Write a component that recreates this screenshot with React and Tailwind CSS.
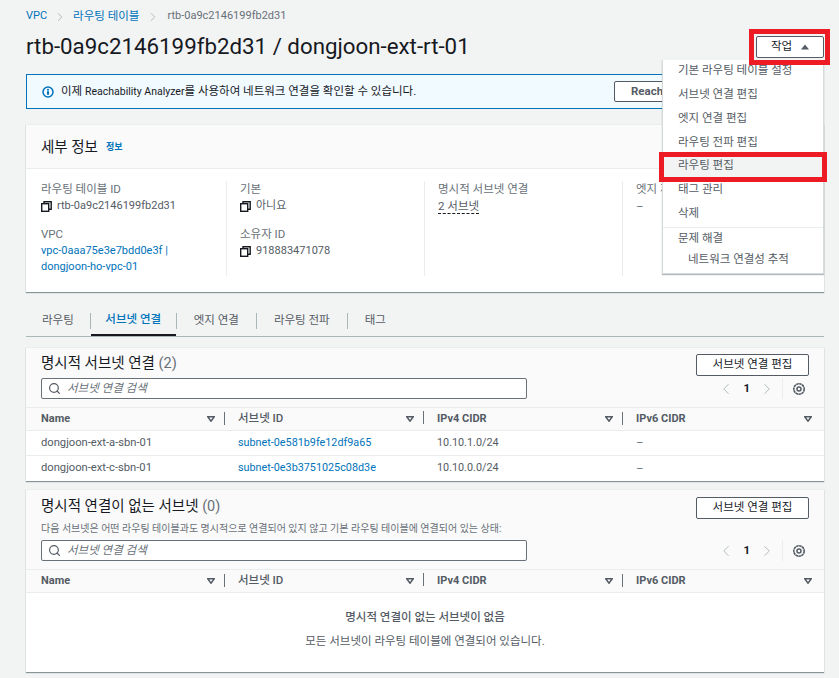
import React from 'react';
import { ChevronLeft, ChevronRight, Search } from 'lucide-react';

const FONT = "font-['Roboto','Noto_Sans_CJK_KR',sans-serif]";

function CopyIcon() {
  return (
    <svg width="11" height="11" viewBox="0 0 11 11" fill="none" stroke="#16191f" strokeWidth="1.4" className="shrink-0">
      <rect x="0.7" y="2.7" width="7" height="7.6" fill="#fff" />
      <path d="M3 2.5V0.8h7.2v7.4H8" />
    </svg>
  );
}

function InfoIcon() {
  return (
    <svg width="12" height="12" viewBox="0 0 12 12" className="shrink-0">
      <circle cx="6" cy="6" r="5" fill="none" stroke="#0073bb" strokeWidth="1.5" />
      <rect x="5" y="5.2" width="2" height="3.6" fill="#0073bb" />
      <rect x="5" y="2.9" width="2" height="1.6" fill="#0073bb" />
    </svg>
  );
}

function GearIcon() {
  return (
    <svg width="14" height="14" viewBox="0 0 14 14" fill="none" stroke="#545b64" className="shrink-0">
      <circle cx="7" cy="7" r="5.2" strokeWidth="1.6" strokeDasharray="2.6 0.4" />
      <circle cx="7" cy="7" r="2" strokeWidth="1.5" />
    </svg>
  );
}

function Caret({ up, className = '' }) {
  return (
    <svg width="8" height="6" viewBox="0 0 8 6" className={className}>
      {up ? (
        <path d="M4 0.5L8 5.5H0Z" fill="#545b64" />
      ) : (
        <path d="M0.8 0.8H7.2L4 5.2Z" fill="#fff" stroke="#545b64" strokeWidth="1.5" />
      )}
    </svg>
  );
}

function Field({ label, children, className = '' }) {
  return (
    <div className={className}>
      <div className="text-[#687078] leading-[15px] pt-[1px]">{label}</div>
      <div className="leading-[16px] pt-[1px]">{children}</div>
    </div>
  );
}

function Copyable({ children }) {
  return (
    <div className="flex items-center gap-[5px] text-[#545b64] text-[11px]">
      <CopyIcon />
      <span>{children}</span>
    </div>
  );
}

function HeaderCell({ children, first, last, korean }) {
  return (
    <div className={`flex items-center w-[199px] pr-[10px] relative shrink-0 ${first ? 'pl-[15px]' : 'pl-[13px]'}`}>
      <span className={`grow text-[#545b64] ${korean ? 'font-medium' : 'font-bold text-[11px]'}`}>{children}</span>
      <Caret />
      {!last && <span className="absolute right-[0px] top-[1px] h-[13px] w-px bg-[#687078]" />}
    </div>
  );
}

function TableHeader() {
  return (
    <div className="flex items-center h-[24px] bg-[#fafafa] border-y border-[#eaeded]">
      <HeaderCell first>Name</HeaderCell>
      <HeaderCell korean>서브넷 ID</HeaderCell>
      <HeaderCell>IPv4 CIDR</HeaderCell>
      <HeaderCell last>IPv6 CIDR</HeaderCell>
    </div>
  );
}

function Row({ name, id, cidr, last }) {
  return (
    <div className={`flex items-center h-[25px] ${last ? '' : 'border-b border-[#eaeded]'}`}>
      <div className="w-[199px] pl-[15px] shrink-0 text-[#545b64] text-[11.2px]">{name}</div>
      <div className="w-[199px] pl-[13px] shrink-0 text-[#0073bb] text-[10.8px]">{id}</div>
      <div className="w-[199px] pl-[13px] shrink-0 text-[#545b64] text-[10.8px]">{cidr}</div>
      <div className="pl-[13px] text-[#687078]">–</div>
    </div>
  );
}

function SearchBox() {
  return (
    <div className="w-[486px] h-[21px] flex items-center gap-[6px] pl-[6px] bg-white border border-[#687078] rounded-[2px]">
      <Search size={13} strokeWidth={2.2} color="#545b64" />
      <span className="italic text-[#687078]">서브넷 연결 검색</span>
    </div>
  );
}

function Pager() {
  return (
    <div className="flex items-center h-[21px] mr-[3px]">
      <ChevronLeft size={18} strokeWidth={1.2} color="#aab7b8" />
      <span className="mx-[8px] font-bold text-[#16191f]">1</span>
      <ChevronRight size={18} strokeWidth={1.2} color="#aab7b8" />
      <span className="ml-[6px] h-[21px] w-px bg-[#eaeded]" />
      <span className="ml-[9px]"><GearIcon /></span>
    </div>
  );
}

function EditButton() {
  return (
    <div className="w-[113px] h-[22px] flex items-center justify-center bg-white border border-[#545b64] rounded-[2px] text-[#16191f]">
      서브넷 연결 편집
    </div>
  );
}

const menuItems = ['기본 라우팅 테이블 설정', '서브넷 연결 편집', '엣지 연결 편집', '라우팅 전파 편집', '라우팅 편집', '태그 관리', '삭제'];

function ActionMenu() {
  return (
    <div className="absolute left-[662px] top-[60px] w-[162px] h-[214px] bg-white border-r border-b border-l border-[#d5dbdb] shadow-[0_1px_1px_rgba(0,28,36,0.3)] text-[#545b64]">
      <div className="-mt-[1px]">
        {menuItems.map((item, i) => (
          <div key={item} className={`h-[23.8px] pl-[15px] flex items-center ${i === 4 ? 'bg-[#f2f3f3]' : ''}`}>
            {item}
          </div>
        ))}
      </div>
      <div className="border-t border-[#eaeded] mt-[1px] h-[23px] pl-[15px] pt-[1px] flex items-center">문제 해결</div>
      <div className="h-[20px] pl-[25px] flex items-center">네트워크 연결성 추적</div>
    </div>
  );
}

export default function App() {
  return (
    <div className={`${FONT} relative w-[839px] h-[678px] overflow-hidden bg-[#f2f3f3] text-[11.5px] text-[#16191f]`}>
      <div className="w-[798px] ml-[26px] flex flex-col">
        <nav className="flex items-center h-[13px] mt-[10px]">
          <span className="text-[#0073bb] text-[11px]">VPC</span>
          <ChevronRight size={14} strokeWidth={1} color="#879596" className="mx-[6px]" />
          <span className="text-[#0073bb]">라우팅 테이블</span>
          <ChevronRight size={14} strokeWidth={1} color="#879596" className="mx-[7px]" />
          <span className="text-[#687078] text-[11px]">rtb-0a9c2146199fb2d31</span>
        </nav>

        <div className="flex items-center justify-between h-[28px] mt-[10px]">
          <h1 className="text-[22.3px] font-normal text-[#16191f]">rtb-0a9c2146199fb2d31 / dongjoon-ext-rt-01</h1>
          <div className="w-[68px] h-[22px] flex items-center justify-center gap-[9px] bg-white border border-[#545b64] rounded-[2px]">
            작업 <Caret up />
          </div>
        </div>

        <div className="flex items-center justify-between h-[35px] mt-[13px] bg-[#f1faff] border border-[#0073bb] pl-[15px] pr-[10px]">
          <div className="flex items-center gap-[7px]">
            <InfoIcon />
            <span>이제 <span className="text-[10.5px]">Reachability Analyzer</span>를 사용하여 네트워크 연결을 확인할 수 있습니다.</span>
          </div>
          <div className="w-[199px] h-[21px] flex items-center pl-[16px] bg-white border border-[#545b64] rounded-[2px] font-bold text-[#545b64]">
            Reachability Analyzer
          </div>
        </div>

        <section className="mt-[15px] h-[168px] bg-white border-t border-[#eaeded] shadow-[0_1px_1px_#879596]">
          <div className="h-[44px] flex items-center pl-[15px] pt-[3px] gap-[8px] bg-[#fafafa] border-b border-[#eaeded]">
            <h2 className="text-[14.5px] font-normal leading-[16px]">세부 정보</h2>
            <span className="text-[9px] text-[#0073bb] font-bold">정보</span>
          </div>
          <div className="flex mt-[12px] h-[95px]">
            <div className="w-[201px] pl-[15px] border-r border-[#eaeded]">
              <Field label="라우팅 테이블 ID"><Copyable>rtb-0a9c2146199fb2d31</Copyable></Field>
              <Field label="VPC" className="mt-[12px]">
                <div className="text-[#0073bb] text-[11px]">vpc-0aaa75e3e7bdd0e3f |<br />dongjoon-ho-vpc-01</div>
              </Field>
            </div>
            <div className="w-[198px] pl-[13px] border-r border-[#eaeded]">
              <Field label="기본"><Copyable>아니요</Copyable></Field>
              <Field label="소유자 ID" className="mt-[12px]"><Copyable>918883471078</Copyable></Field>
            </div>
            <div className="w-[198px] pl-[13px] border-r border-[#eaeded]">
              <Field label="명시적 서브넷 연결">
                <span className="border-b border-dashed border-[#16191f] text-[#545b64]">2 서브넷</span>
              </Field>
            </div>
            <div className="pl-[13px]">
              <Field label="엣지 게이트웨이 연결"><span className="text-[#687078]">–</span></Field>
            </div>
          </div>
        </section>

        <div className="mt-[13px] h-[32px] flex items-start border-b border-[#aab7b8] text-[#545b64]">
          <div className="flex items-center h-[31px]">
            <span className="px-[16px]">라우팅</span>
            <span className="h-[16px] w-px bg-[#aab7b8]" />
          </div>
          <div className="flex items-center justify-center h-[31px] w-[85px] font-medium text-[#0073bb] border-b-2 border-[#16191f]">서브넷 연결</div>
          <div className="flex items-center h-[31px]">
            <span className="h-[16px] w-px bg-[#aab7b8]" />
            <span className="px-[17px]">엣지 연결</span>
            <span className="h-[16px] w-px bg-[#aab7b8]" />
            <span className="px-[17px]">라우팅 전파</span>
            <span className="h-[16px] w-px bg-[#aab7b8]" />
            <span className="px-[17px]">태그</span>
          </div>
        </div>

        <section className="mt-[10px] bg-white shadow-[0_1px_1px_#879596] border-t border-[#eaeded]">
          <div className="bg-[#fafafa] h-[59px] flex justify-between pl-[15px] pr-[15px]">
            <div className="pt-[6px]">
              <div className="text-[14.5px] leading-[20px]">명시적 서브넷 연결 <span className="text-[#687078]">(2)</span></div>
              <div className="mt-[4px]"><SearchBox /></div>
            </div>
            <div className="flex flex-col items-end gap-[2px] pt-[6px]">
              <EditButton />
              <Pager />
            </div>
          </div>
          <TableHeader />
          <Row name="dongjoon-ext-a-sbn-01" id="subnet-0e581b9fe12df9a65" cidr="10.10.1.0/24" />
          <Row name="dongjoon-ext-c-sbn-01" id="subnet-0e3b3751025c08d3e" cidr="10.10.0.0/24" last />
        </section>

        <section className="mt-[8px] h-[183px] bg-white shadow-[0_1px_1px_#879596] border-t border-[#eaeded]">
          <div className="bg-[#fafafa] h-[79px] flex justify-between pl-[15px] pr-[15px]">
            <div className="pt-[7px]">
              <div className="text-[14.5px] leading-[20px]">명시적 연결이 없는 서브넷 <span className="text-[#687078]">(0)</span></div>
              <div className="mt-[5px] text-[10px] leading-[13px] text-[#687078] whitespace-nowrap">다음 서브넷은 어떤 라우팅 테이블과도 명시적으로 연결되어 있지 않고 기본 라우팅 테이블에 연결되어 있는 상태:</div>
              <div className="mt-[5px]"><SearchBox /></div>
            </div>
            <div className="flex flex-col items-end justify-between pt-[7px] pb-[8px]">
              <EditButton />
              <Pager />
            </div>
          </div>
          <TableHeader />
          <div className="flex flex-col items-center pt-[14px] text-[#545b64]">
            <div className="font-medium leading-[20px]">명시적 연결이 없는 서브넷이 없음</div>
            <div className="mt-[4px] leading-[20px]">모든 서브넷이 라우팅 테이블에 연결되어 있습니다.</div>
          </div>
        </section>
      </div>

      <ActionMenu />
      <div className="absolute left-[749px] top-[29px] w-[81px] h-[36px] border-[5px] border-[#ed1c24]" />
      <div className="absolute left-[659px] top-[152px] w-[168px] h-[30px] border-[5px] border-[#ed1c24]" />
    </div>
  );
}
